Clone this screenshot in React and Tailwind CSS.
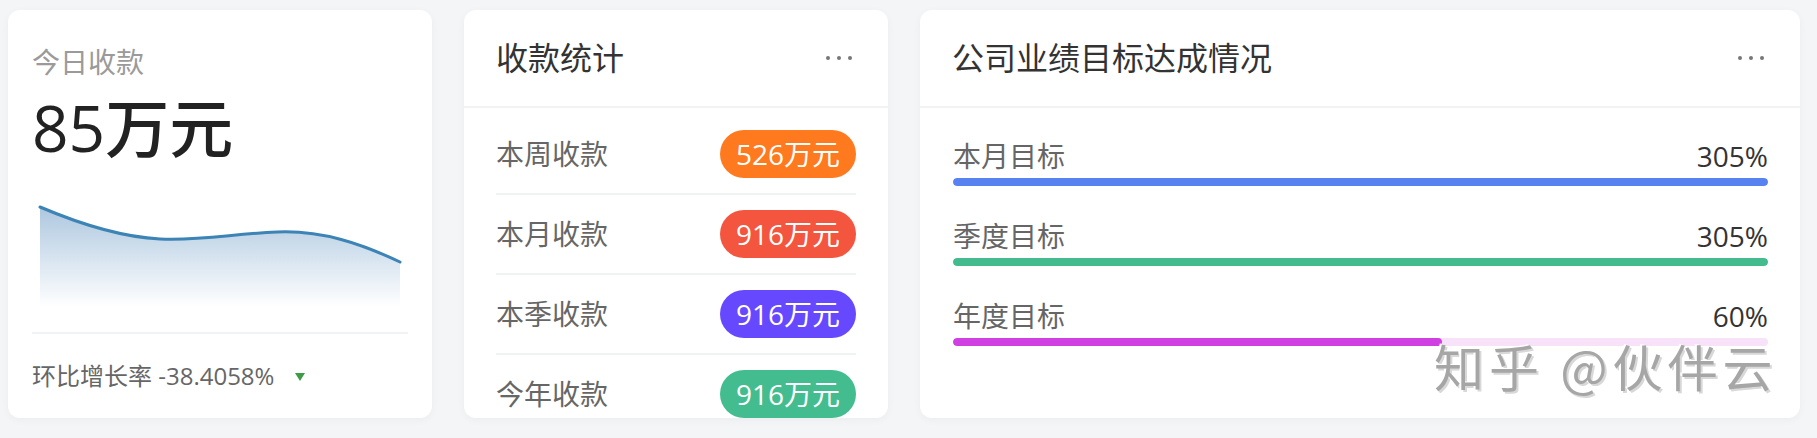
import React from "react";

const FONT = { fontFamily: '"Open Sans", "Noto Sans CJK SC", sans-serif' };

function Dots() {
  return (
    <div className="flex items-center gap-[7px]">
      <span className="w-[4px] h-[4px] rounded-full bg-[#777]" />
      <span className="w-[4px] h-[4px] rounded-full bg-[#777]" />
      <span className="w-[4px] h-[4px] rounded-full bg-[#777]" />
    </div>
  );
}

function CardHeader({ title }) {
  return (
    <div className="h-[98px] shrink-0 border-b-2 border-[#f1f2f4] flex items-center justify-between pl-[32px] pr-[36px]">
      <span className="text-[32px] leading-[40px] text-[#333]">{title}</span>
      <Dots />
    </div>
  );
}

const stats = [
  { label: "本周收款", value: "526万元", color: "bg-[#ff7a1e]" },
  { label: "本月收款", value: "916万元", color: "bg-[#f4553f]" },
  { label: "本季收款", value: "916万元", color: "bg-[#6649ff]" },
  { label: "今年收款", value: "916万元", color: "bg-[#43bd8f]" },
];

const goals = [
  { label: "本月目标", pct: "305%", width: 100, bar: "bg-[#5882ef]", track: "bg-[#e6edfd]" },
  { label: "季度目标", pct: "305%", width: 100, bar: "bg-[#43bb8e]", track: "bg-[#e3f5ee]" },
  { label: "年度目标", pct: "60%", width: 60, bar: "bg-[#d03fe2]", track: "bg-[#f7e2f9]" },
];

export default function App() {
  const line = "M8,15 C48,32 88,45 128,47 S200,42 245,40 S330,52 368,70";
  return (
    <div className="w-full h-[438px] bg-[#f4f5f7] flex gap-[32px] pl-[8px] pt-[10px]" style={FONT}>
      {/* Card 1 */}
      <div className="w-[424px] h-[408px] bg-white rounded-[12px] shadow-[0_2px_8px_rgba(0,0,0,0.04)] px-[24px] pt-[32px] flex flex-col">
        <div className="text-[28px] leading-[40px] text-[#9a9a9a]">今日收款</div>
        <div className="mt-[10px] text-[64px] leading-[72px] text-[#222] font-medium">85万元</div>
        <svg width="376" height="130" viewBox="0 0 376 130" className="mt-[28px] block">
          <defs>
            <linearGradient id="g1" x1="0" y1="0" x2="0" y2="1">
              <stop offset="0" stopColor="#adc7df" />
              <stop offset="1" stopColor="#ffffff" />
            </linearGradient>
          </defs>
          <path d={line + " L368,115 L8,115 Z"} fill="url(#g1)" />
          <path d={line} fill="none" stroke="#3c84b6" strokeWidth="3" strokeLinecap="round" />
        </svg>
        <div className="mt-[10px] h-[2px] bg-[#f1f2f4]" />
        <div className="mt-[26px] flex items-center text-[24px] leading-[32px] text-[#666]">
          <span>环比增长率 -38.4058%</span>
          <svg width="10" height="8" viewBox="0 0 10 8" className="ml-[21px] mt-[2px]">
            <path d="M0,0 L10,0 L5,8 Z" fill="#3d9c45" />
          </svg>
        </div>
      </div>

      {/* Card 2 */}
      <div className="w-[424px] h-[408px] bg-white rounded-[12px] shadow-[0_2px_8px_rgba(0,0,0,0.04)] overflow-hidden flex flex-col">
        <CardHeader title="收款统计" />
        <div className="px-[32px] pt-[7px] flex flex-col">
          {stats.map((s) => (
            <div key={s.label} className="h-[80px] shrink-0 border-b-2 border-[#f1f2f4] flex items-center justify-between">
              <span className="text-[28px] leading-[40px] text-[#666]">{s.label}</span>
              <span className={`h-[48px] px-[16px] rounded-full flex items-center text-[28px] text-white ${s.color}`}>
                {s.value}
              </span>
            </div>
          ))}
        </div>
      </div>

      {/* Card 3 */}
      <div className="relative w-[880px] h-[408px] bg-white rounded-[12px] shadow-[0_2px_8px_rgba(0,0,0,0.04)] overflow-hidden flex flex-col">
        <CardHeader title="公司业绩目标达成情况" />
        <div className="pl-[33px] pr-[32px] pt-[28px] flex flex-col gap-[30px]">
          {goals.map((g) => (
            <div key={g.label} className="flex flex-col">
              <div className="h-[40px] flex items-center justify-between">
                <span className="text-[28px] leading-[40px] text-[#666]">{g.label}</span>
                <span className="text-[28px] leading-[40px] text-[#333]">{g.pct}</span>
              </div>
              <div className={`mt-[2px] h-[8px] rounded-full overflow-hidden ${g.track}`}>
                <div className={`h-full rounded-full ${g.bar}`} style={{ width: `${g.width}%` }} />
              </div>
            </div>
          ))}
        </div>
        <div
          className="absolute left-[514px] top-[330px] text-[50px] leading-[50px] text-[#a6a6a6] tracking-[5px] [text-shadow:-2px_-1px_0_#ffffff,2px_2px_0_#d8d8d8]"
          style={{ fontFamily: '"Noto Sans CJK SC", sans-serif' }}
        >
          知乎 @伙伴云
        </div>
      </div>
    </div>
  );
}
